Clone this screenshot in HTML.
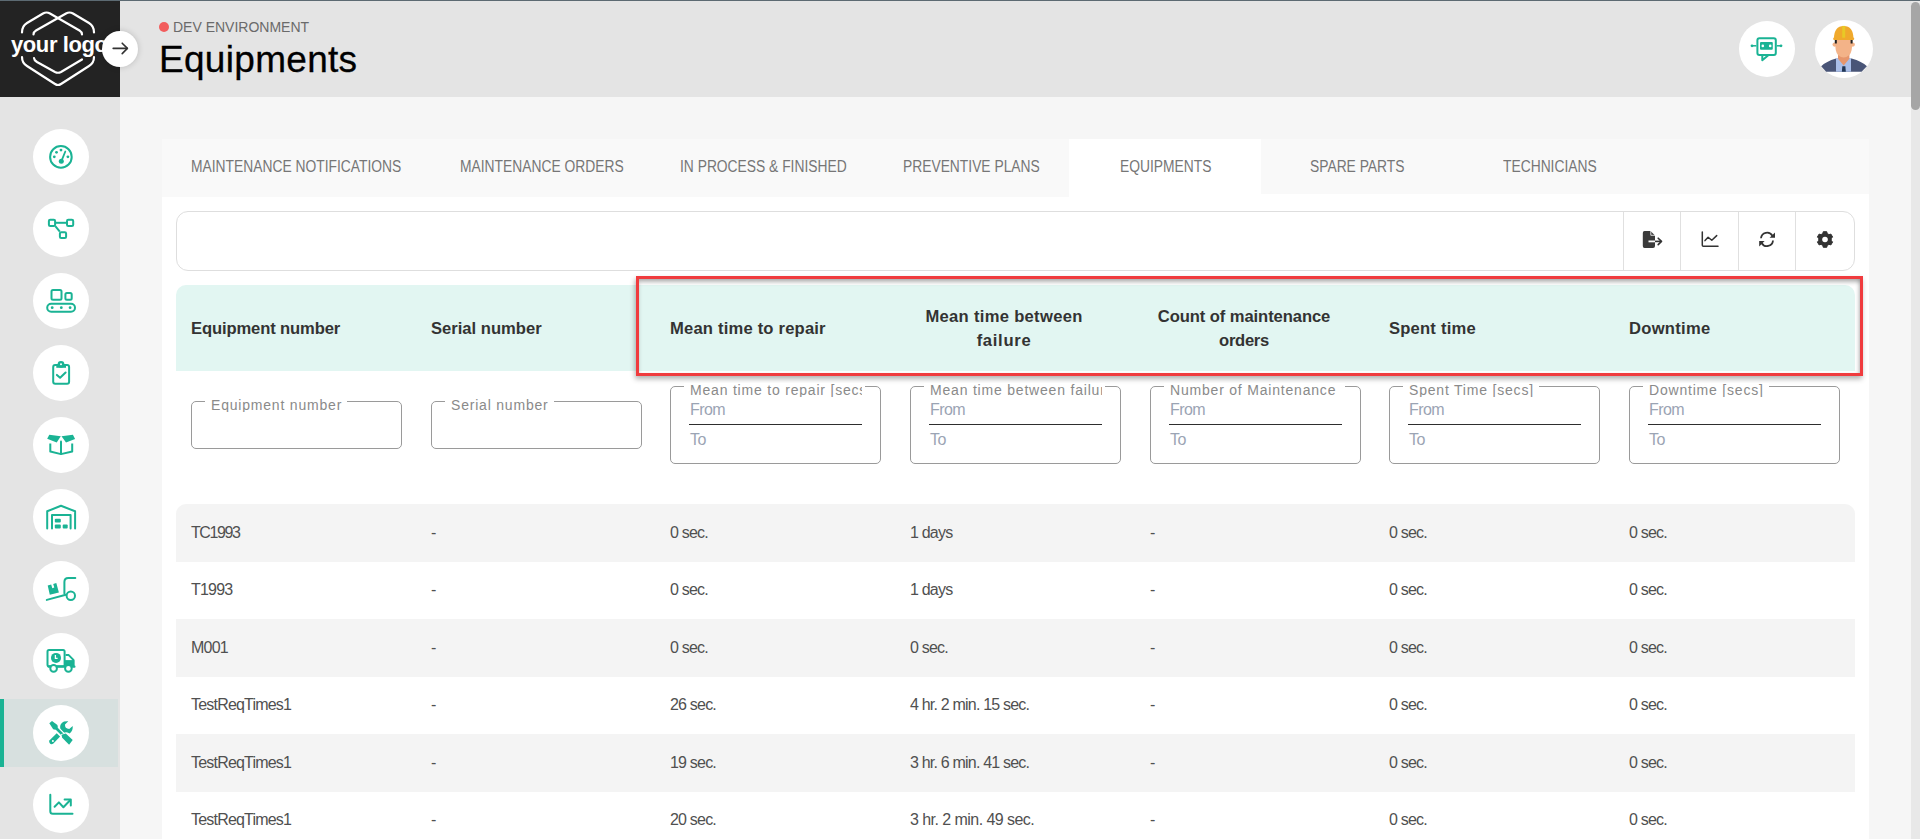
<!DOCTYPE html>
<html><head><meta charset="utf-8">
<style>
*{box-sizing:border-box;margin:0;padding:0}
html,body{width:1920px;height:839px;overflow:hidden}
body{position:relative;background:#f6f6f6;font-family:"Liberation Sans",sans-serif;color:#333}
.a{position:absolute}
.t{position:absolute;white-space:nowrap;line-height:1}
#topline{left:0;top:0;width:1920px;height:1px;background:#5c6a72}
#header{left:120px;top:1px;width:1791px;height:96px;background:#e4e4e4}
#logo{left:0;top:1px;width:120px;height:96px;background:#232323}
#sidebar{left:0;top:97px;width:120px;height:742px;background:#e4e4e4}
#track{left:1911px;top:1px;width:9px;height:838px;background:#e8e8e8}
#thumb{left:1911px;top:2px;width:9px;height:108px;background:#a6a6a6;border-radius:5px}
.circ{position:absolute;width:56px;height:56px;border-radius:50%;background:#fff}
.circ svg{position:absolute;left:0;top:0}
#card{left:162px;top:139px;width:1707px;height:700px;background:#fff}
.tabbg{position:absolute;background:#f9f9f9}
.tab{position:absolute;top:159px;font-size:16px;transform-origin:0 0;transform:scaleX(0.864);color:#767676;line-height:1;white-space:nowrap}
#toolbar{left:176px;top:211px;width:1679px;height:60px;border:1px solid #dedede;border-radius:12px;background:#fff}
.sep{position:absolute;top:212px;width:1px;height:58px;background:#e0e0e0}
#thead{left:176px;top:285px;width:1679px;height:86px;background:#e2f6f2;border-radius:10px 10px 0 0}
.th{position:absolute;font-size:16.6px;font-weight:bold;color:#333;line-height:24px;white-space:nowrap}
#redbox{left:636px;top:276px;width:1227px;height:100px;border:3px solid #f03b3e;box-shadow:-1px 3px 5px rgba(0,0,0,.3), inset 0 4px 4px -1px rgba(0,0,0,.3), inset -3px 0 4px -2px rgba(0,0,0,.2)}
.fld{position:absolute;border:1px solid #9a9a9a;border-radius:5px}
.lgd{position:absolute;background:#fff;height:14px;padding-left:6px}
.lgd span{display:block;overflow:hidden;font-size:14px;letter-spacing:0.8px;color:#8a8a8a;line-height:14px;white-space:nowrap}
.ph{position:absolute;font-size:16px;letter-spacing:-0.6px;color:#9ba4b4;line-height:1;white-space:nowrap}
.uline{position:absolute;height:1px;background:#2e2e2e}
.row{position:absolute;left:176px;width:1679px}
.g{background:#f4f4f4}
.td{position:absolute;font-size:16px;letter-spacing:-0.8px;color:#505050;line-height:1;white-space:nowrap}
</style></head><body>
<div id="topline" class="a"></div>
<div id="header" class="a"></div>
<div id="logo" class="a"></div>
<div id="sidebar" class="a"></div>
<div id="track" class="a"></div>
<div id="thumb" class="a"></div>

<div class="a" style="left:0;top:699px;width:118px;height:68px;background:#d7e0df"></div>
<div class="a" style="left:0;top:699px;width:4px;height:68px;background:#1ab394"></div>
<div class="circ" style="left:33px;top:129px"></div>
<svg class="a" style="left:41px;top:137px" width="40" height="40" viewBox="0 0 40 40"><circle cx="19.9" cy="19.9" r="10.8" fill="none" stroke="#1ab394" stroke-width="2"/>
<line x1="20.3" y1="24.3" x2="24.3" y2="14.5" stroke="#1ab394" stroke-width="1.8" stroke-linecap="round"/>
<circle cx="20.3" cy="24.3" r="2.5" fill="#1ab394"/>
<circle cx="13.3" cy="19.8" r="1.4" fill="#1ab394"/><circle cx="15.5" cy="15.3" r="1.4" fill="#1ab394"/>
<circle cx="20" cy="13.1" r="1.4" fill="#1ab394"/><circle cx="26.9" cy="19.8" r="1.4" fill="#1ab394"/></svg>
<div class="circ" style="left:33px;top:201px"></div>
<svg class="a" style="left:41px;top:209px" width="40" height="40" viewBox="0 0 40 40"><g fill="none" stroke="#1ab394" stroke-width="2"><rect x="7.9" y="10.8" width="6.2" height="6.2" rx="1.3"/>
<rect x="26" y="10.8" width="6.2" height="6.2" rx="1.3"/><rect x="18.9" y="23.2" width="6.2" height="5.8" rx="1.3"/>
<line x1="14" y1="13.8" x2="26" y2="13.8"/><line x1="14.3" y1="17.2" x2="18.8" y2="22.6"/></g></svg>
<div class="circ" style="left:33px;top:273px"></div>
<svg class="a" style="left:41px;top:281px" width="40" height="40" viewBox="0 0 40 40"><g fill="none" stroke="#1ab394" stroke-width="2"><rect x="10.5" y="8.9" width="10" height="9.9" rx="1.5"/>
<rect x="24.4" y="12" width="6.3" height="6.8" rx="1.5"/><rect x="6.2" y="22.7" width="27.8" height="8" rx="4"/></g>
<circle cx="11.2" cy="26.7" r="1.4" fill="#1ab394"/><circle cx="20.3" cy="26.7" r="1.4" fill="#1ab394"/><circle cx="29.1" cy="26.7" r="1.4" fill="#1ab394"/></svg>
<div class="circ" style="left:33px;top:345px"></div>
<svg class="a" style="left:41px;top:353px" width="40" height="40" viewBox="0 0 40 40"><rect x="12.2" y="12" width="15.9" height="18.7" rx="2" fill="none" stroke="#1ab394" stroke-width="2"/>
<rect x="15.3" y="11.2" width="9.7" height="3.6" fill="#1ab394"/><circle cx="20" cy="11.3" r="3.4" fill="#1ab394"/><circle cx="20" cy="11.3" r="1" fill="#fff"/>
<polyline points="15.9,21.9 19.1,24.8 24.6,19.5" fill="none" stroke="#1ab394" stroke-width="2" stroke-linecap="round" stroke-linejoin="round"/></svg>
<div class="circ" style="left:33px;top:417px"></div>
<svg class="a" style="left:41px;top:425px" width="40" height="40" viewBox="0 0 40 40"><polygon points="6.2,13.8 8.3,9.8 19.8,11.2 15.7,17.6" fill="#1ab394"/><polygon points="20.5,11.2 31.9,9.8 34.1,14.1 25,17.6" fill="#1ab394"/>
<polyline points="9.3,18.4 9.3,26.5 20,29.1 31.2,26.5 31.2,18.4" fill="none" stroke="#1ab394" stroke-width="2" stroke-linejoin="round"/>
<line x1="20" y1="16.4" x2="20" y2="28.8" stroke="#1ab394" stroke-width="2" stroke-linecap="round"/></svg>
<div class="circ" style="left:33px;top:489px"></div>
<svg class="a" style="left:41px;top:497px" width="40" height="40" viewBox="0 0 40 40"><polyline points="6.2,31.5 6.2,14.3 20,8.8 34.1,14.3 34.1,31.5" fill="none" stroke="#1ab394" stroke-width="2" stroke-linejoin="round" stroke-linecap="round"/>
<polyline points="11,31.5 11,18.1 29.6,18.1 29.6,31.5" fill="none" stroke="#1ab394" stroke-width="2" stroke-linejoin="round" stroke-linecap="round"/>
<rect x="13.8" y="21.7" width="6" height="3.8" rx="1" fill="#1ab394"/><rect x="13.8" y="27.4" width="6" height="4.1" rx="1" fill="#1ab394"/><rect x="21.7" y="27.4" width="5" height="4.1" rx="1" fill="#1ab394"/></svg>
<div class="circ" style="left:33px;top:561px"></div>
<svg class="a" style="left:41px;top:569px" width="40" height="40" viewBox="0 0 40 40"><path d="M23.4 24.5V13Q23.4 9.1 27.3 9.1H34.3" fill="none" stroke="#1ab394" stroke-width="2" stroke-linecap="round"/>
<line x1="5.8" y1="30.9" x2="24.8" y2="25.7" stroke="#1ab394" stroke-width="2" stroke-linecap="round"/>
<circle cx="29.8" cy="26.7" r="4.2" fill="none" stroke="#1ab394" stroke-width="2"/>
<polygon points="6.7,16.4 10.2,15.5 11.3,19.2 13.3,18.6 12.2,14.9 15.3,14.1 17.9,23.4 8.8,25.7" fill="#1ab394"/></svg>
<div class="circ" style="left:33px;top:633px"></div>
<svg class="a" style="left:41px;top:641px" width="40" height="40" viewBox="0 0 40 40"><rect x="6.5" y="8.9" width="17.1" height="16.3" rx="1.5" fill="none" stroke="#1ab394" stroke-width="2"/>
<circle cx="15" cy="16.9" r="5" fill="#1ab394"/><polyline points="14.4,13.9 14.4,17.4 16.6,17.4" fill="none" stroke="#fff" stroke-width="1.3"/>
<path d="M24.6 13.9H27.5L32.4 18.8V25" fill="none" stroke="#1ab394" stroke-width="2"/>
<rect x="23.6" y="19.1" width="9.8" height="7" fill="#1ab394"/><rect x="6.5" y="24.5" width="28" height="2.2" rx="1" fill="#1ab394"/>
<circle cx="12.6" cy="27.4" r="3.3" fill="#fff" stroke="#1ab394" stroke-width="2"/><circle cx="27.4" cy="27.4" r="3.3" fill="#fff" stroke="#1ab394" stroke-width="2"/></svg>
<div class="circ" style="left:33px;top:705px"></div>
<svg class="a" style="left:41px;top:713px" width="40" height="40" viewBox="0 0 40 40"><path d="M19.2 15.5Q18.5 10.5 23 8.6Q25 8 27.3 8.2L24 11.6Q23.6 15.8 28.2 15.9L31.7 13Q32.2 18 28.6 20.5L26.5 19.5Q24.8 18.6 22.5 20Z" fill="#1ab394"/>
<path d="M8.6 27.3L15.7 20.3L19.1 23.4L12.4 30.6Q10 32 8.6 30Q7.6 28.5 8.6 27.3Z" fill="#1ab394"/><circle cx="11.9" cy="28.1" r="1" fill="#fff"/>
<line x1="15" y1="15" x2="22" y2="22" stroke="#fff" stroke-width="5"/>
<path d="M8.3 10.3L11 8.1L16.4 11.9L16.9 14.3L14.3 16.7L12.2 16.2Z" fill="#1ab394"/>
<line x1="14.5" y1="14.5" x2="22" y2="22" stroke="#1ab394" stroke-width="2.6"/>
<path d="M20.5 21.7L24.8 20.5L31.7 26.9L28.1 31.7L21.2 24.8Z" fill="#1ab394" stroke="#fff" stroke-width="1.2" stroke-linejoin="round" paint-order="stroke"/></svg>
<div class="circ" style="left:33px;top:777px"></div>
<svg class="a" style="left:41px;top:785px" width="40" height="40" viewBox="0 0 40 40"><path d="M9.3 9.8V26.3Q9.3 28.8 11.8 28.8H31.5" fill="none" stroke="#1ab394" stroke-width="2" stroke-linecap="round"/>
<polyline points="13.6,21.7 17.9,17.4 22.4,22.2 28.6,15.7" fill="none" stroke="#1ab394" stroke-width="2" stroke-linecap="round" stroke-linejoin="round"/>
<polyline points="23.6,14.5 29.8,14.5 29.8,20.5" fill="none" stroke="#1ab394" stroke-width="2" stroke-linecap="round" stroke-linejoin="round"/></svg>
<svg class="a" style="left:0;top:0" width="120" height="97" viewBox="0 0 120 97"><g fill="none" stroke="#fff" stroke-width="2.2" stroke-linecap="round">
<path d="M22 32.5Q22 26 27 23L43 13.5Q46.5 11.5 50 13.5L79.5 30.5Q82 32 82 34.5"/>
<path d="M33.5 34.5Q33.5 32 36 30.5L66 13.5Q69.5 11.5 73 13.5L89 23Q94 26 94 32.5"/>
<path d="M22 57Q22 63 27 66L55 84Q58 86 61 84L89 66Q94 63 94 57"/>
<path d="M34 58Q34 60 37 62L55 72Q58 73.5 61 72L82 59.5"/></g></svg>
<div class="t" style="left:11px;top:34px;font-size:22px;font-weight:bold;letter-spacing:-0.4px;color:#fff">your logo</div>
<div class="a" style="left:102px;top:31px;width:36px;height:36px;border-radius:50%;background:#fff;box-shadow:0 0 6px rgba(0,0,0,.18)"></div>
<svg class="a" style="left:102px;top:31px" width="36" height="36" viewBox="0 0 36 36"><g fill="none" stroke="#333" stroke-width="1.6" stroke-linecap="round" stroke-linejoin="round"><line x1="11.2" y1="17.4" x2="25.2" y2="17.4"/><polyline points="20.2,12.2 25.4,17.4 20.2,22.6"/></g></svg>
<div class="a" style="left:1738.5px;top:21px;width:56px;height:56px;border-radius:50%;background:#fff"></div>
<svg class="a" style="left:1736px;top:18px" width="60" height="60" viewBox="0 0 60 60">
<rect x="21.4" y="20.2" width="18.4" height="16.7" rx="2" fill="none" stroke="#1ab394" stroke-width="2"/>
<rect x="24" y="24" width="12.8" height="7.8" rx="1" fill="#1ab394"/><circle cx="26.8" cy="27.9" r="1.3" fill="#fff"/><circle cx="34.2" cy="27.9" r="1.3" fill="#fff"/>
<line x1="16" y1="27.8" x2="20.4" y2="27.8" stroke="#1ab394" stroke-width="1.5"/><line x1="40.8" y1="27.8" x2="45" y2="27.8" stroke="#1ab394" stroke-width="1.5"/>
<circle cx="16" cy="27.8" r="1.4" fill="#1ab394"/><circle cx="45" cy="27.8" r="1.4" fill="#1ab394"/>
<path d="M26.3 36.9V42.2L32.6 37" fill="none" stroke="#1ab394" stroke-width="2" stroke-linejoin="round"/></svg>
<div class="a" style="left:1815px;top:20px;width:58px;height:58px;border-radius:50%;background:#fff"></div>
<svg class="a" style="left:1812px;top:16px" width="64" height="64" viewBox="0 0 64 64">
<path d="M9.2 50.3Q14 45.5 24 42.6H39.6Q50 45.5 54.9 50.3L49.6 55.7H14.1Z" fill="#495577"/>
<rect x="24" y="42" width="15" height="13.7" fill="#a9bee8"/>
<path d="M26 36.6H37.4V42.8L31.7 49.6L26 42.8Z" fill="#e6966c"/>
<path d="M30.3 50.3H33.4L33.8 55.7H29.9Z" fill="#1f3554"/>
<circle cx="22.6" cy="28.6" r="2.1" fill="#f3b388"/><circle cx="40.8" cy="28.6" r="2.1" fill="#f3b388"/>
<path d="M23 24Q23 36 26 39Q29 41.5 31.7 41.5Q34.4 41.5 37.4 39Q40.4 36 40.4 24Z" fill="#f3b388"/>
<rect x="22.8" y="22.5" width="2" height="5" fill="#222"/><rect x="38.6" y="22.5" width="2" height="5" fill="#222"/>
<path d="M22 22.5Q22 10 31.7 9.9Q41.4 10 41.4 22.5Z" fill="#f0a92c"/>
<rect x="21.2" y="21.6" width="21" height="2.4" rx="1" fill="#f0a92c"/>
<rect x="30.2" y="9.9" width="3" height="11.8" fill="#e8c926"/></svg>

<!-- header text -->
<div class="a" style="left:159px;top:22px;width:10px;height:10px;border-radius:50%;background:#f25c5c"></div>
<div class="t" style="left:173px;top:20px;font-size:14px;color:#6a6a6a">DEV ENVIRONMENT</div>
<div class="t" style="left:159px;top:41px;font-size:37px;letter-spacing:0.3px;-webkit-text-stroke:0.3px #000;color:#000">Equipments</div>

<div id="card" class="a"></div>
<div class="tabbg" style="left:162px;top:139px;width:907px;height:58px"></div>
<div class="tabbg" style="left:1261px;top:139px;width:608px;height:55px"></div>
<div class="tab" style="left:191px">MAINTENANCE NOTIFICATIONS</div>
<div class="tab" style="left:460px">MAINTENANCE ORDERS</div>
<div class="tab" style="left:680px">IN PROCESS &amp; FINISHED</div>
<div class="tab" style="left:903px">PREVENTIVE PLANS</div>
<div class="tab" style="left:1120px">EQUIPMENTS</div>
<div class="tab" style="left:1310px">SPARE PARTS</div>
<div class="tab" style="left:1503px">TECHNICIANS</div>

<div id="toolbar" class="a"></div>
<div class="sep" style="left:1623px"></div>
<div class="sep" style="left:1680px"></div>
<div class="sep" style="left:1738px"></div>
<div class="sep" style="left:1795px"></div>

<div id="thead" class="a"></div>
<div id="redbox" class="a"></div>
<div class="th" style="left:191px;top:317px;letter-spacing:-0.13px">Equipment number</div>
<div class="th" style="left:431px;top:317px">Serial number</div>
<div class="th" style="left:670px;top:317px;letter-spacing:0.19px">Mean time to repair</div>
<div class="th" style="left:1389px;top:317px;letter-spacing:0.2px">Spent time</div>
<div class="th" style="left:1629px;top:317px;letter-spacing:0.28px">Downtime</div>
<div class="th" style="left:904px;top:305px;width:200px;text-align:center"><span style="letter-spacing:0.3px">Mean time between</span><br><span style="letter-spacing:0.7px">failure</span></div>
<div class="th" style="left:1144px;top:305px;width:200px;text-align:center"><span style="letter-spacing:-0.09px">Count of maintenance</span><br><span style="letter-spacing:-0.3px">orders</span></div>
<div class="fld" style="left:191px;top:401px;width:211px;height:48px"></div>
<div class="fld" style="left:431px;top:401px;width:211px;height:48px"></div>
<div class="fld" style="left:670px;top:386px;width:211px;height:78px"></div>
<div class="ph" style="left:690px;top:401.5px">From</div>
<div class="uline" style="left:689px;top:424px;width:173px"></div>
<div class="ph" style="left:690px;top:431.5px">To</div>
<div class="fld" style="left:910px;top:386px;width:211px;height:78px"></div>
<div class="ph" style="left:930px;top:401.5px">From</div>
<div class="uline" style="left:929px;top:424px;width:173px"></div>
<div class="ph" style="left:930px;top:431.5px">To</div>
<div class="fld" style="left:1150px;top:386px;width:211px;height:78px"></div>
<div class="ph" style="left:1170px;top:401.5px">From</div>
<div class="uline" style="left:1169px;top:424px;width:173px"></div>
<div class="ph" style="left:1170px;top:431.5px">To</div>
<div class="fld" style="left:1389px;top:386px;width:211px;height:78px"></div>
<div class="ph" style="left:1409px;top:401.5px">From</div>
<div class="uline" style="left:1408px;top:424px;width:173px"></div>
<div class="ph" style="left:1409px;top:431.5px">To</div>
<div class="fld" style="left:1629px;top:386px;width:211px;height:78px"></div>
<div class="ph" style="left:1649px;top:401.5px">From</div>
<div class="uline" style="left:1648px;top:424px;width:173px"></div>
<div class="ph" style="left:1649px;top:431.5px">To</div>
<div class="lgd" style="left:205px;top:398px;padding-right:5px"><span>Equipment number</span></div>
<div class="lgd" style="left:445px;top:398px;padding-right:5px"><span>Serial number</span></div>
<div class="lgd" style="left:684px;top:383px;width:181px"><span style="width:172px">Mean time to repair [secs]</span></div>
<div class="lgd" style="left:924px;top:383px;width:181px"><span style="width:172px">Mean time between failure [secs]</span></div>
<div class="lgd" style="left:1164px;top:383px;width:181px"><span style="width:172px">Number of Maintenance</span></div>
<div class="lgd" style="left:1403px;top:383px;padding-right:5px"><span>Spent Time [secs]</span></div>
<div class="lgd" style="left:1643px;top:383px;padding-right:5px"><span>Downtime [secs]</span></div>
<div class="row g" style="top:504.0px;height:57.5px;border-radius:10px 10px 0 0;"></div>
<div class="td" style="left:191px;top:524.8px;letter-spacing:-1.4px">TC1993</div>
<div class="td" style="left:431px;top:524.8px">-</div>
<div class="td" style="left:670px;top:524.8px">0 sec.</div>
<div class="td" style="left:910px;top:524.8px">1 days</div>
<div class="td" style="left:1150px;top:524.8px">-</div>
<div class="td" style="left:1389px;top:524.8px">0 sec.</div>
<div class="td" style="left:1629px;top:524.8px">0 sec.</div>
<div class="td" style="left:191px;top:582.3px">T1993</div>
<div class="td" style="left:431px;top:582.3px">-</div>
<div class="td" style="left:670px;top:582.3px">0 sec.</div>
<div class="td" style="left:910px;top:582.3px">1 days</div>
<div class="td" style="left:1150px;top:582.3px">-</div>
<div class="td" style="left:1389px;top:582.3px">0 sec.</div>
<div class="td" style="left:1629px;top:582.3px">0 sec.</div>
<div class="row g" style="top:619.0px;height:57.5px;"></div>
<div class="td" style="left:191px;top:639.8px">M001</div>
<div class="td" style="left:431px;top:639.8px">-</div>
<div class="td" style="left:670px;top:639.8px">0 sec.</div>
<div class="td" style="left:910px;top:639.8px">0 sec.</div>
<div class="td" style="left:1150px;top:639.8px">-</div>
<div class="td" style="left:1389px;top:639.8px">0 sec.</div>
<div class="td" style="left:1629px;top:639.8px">0 sec.</div>
<div class="td" style="left:191px;top:697.3px">TestReqTimes1</div>
<div class="td" style="left:431px;top:697.3px">-</div>
<div class="td" style="left:670px;top:697.3px">26 sec.</div>
<div class="td" style="left:910px;top:697.3px">4 hr. 2 min. 15 sec.</div>
<div class="td" style="left:1150px;top:697.3px">-</div>
<div class="td" style="left:1389px;top:697.3px">0 sec.</div>
<div class="td" style="left:1629px;top:697.3px">0 sec.</div>
<div class="row g" style="top:734.0px;height:57.5px;"></div>
<div class="td" style="left:191px;top:754.8px">TestReqTimes1</div>
<div class="td" style="left:431px;top:754.8px">-</div>
<div class="td" style="left:670px;top:754.8px">19 sec.</div>
<div class="td" style="left:910px;top:754.8px">3 hr. 6 min. 41 sec.</div>
<div class="td" style="left:1150px;top:754.8px">-</div>
<div class="td" style="left:1389px;top:754.8px">0 sec.</div>
<div class="td" style="left:1629px;top:754.8px">0 sec.</div>
<div class="td" style="left:191px;top:812.3px">TestReqTimes1</div>
<div class="td" style="left:431px;top:812.3px">-</div>
<div class="td" style="left:670px;top:812.3px">20 sec.</div>
<div class="td" style="left:910px;top:812.3px;letter-spacing:-0.55px">3 hr. 2 min. 49 sec.</div>
<div class="td" style="left:1150px;top:812.3px">-</div>
<div class="td" style="left:1389px;top:812.3px">0 sec.</div>
<div class="td" style="left:1629px;top:812.3px">0 sec.</div>
<svg class="a" style="left:1636px;top:225px" width="32" height="30" viewBox="1636 225 32 30">
<path d="M1644.5 231H1650.5L1655 235.5V246Q1655 248 1653 248H1644.5Q1642.8 248 1642.8 246V233Q1642.8 231 1644.5 231Z" fill="#3b3b3b"/>
<path d="M1650.8 231V235.3H1655" fill="none" stroke="#fff" stroke-width="0.8"/>
<rect x="1648.5" y="240.5" width="7" height="1.8" fill="#fff"/>
<line x1="1655" y1="241.4" x2="1661" y2="241.4" stroke="#333" stroke-width="1.6"/>
<polyline points="1658.2,238.2 1661.5,241.4 1658.2,244.6" fill="none" stroke="#333" stroke-width="1.6" stroke-linecap="round" stroke-linejoin="round"/></svg>
<svg class="a" style="left:1695px;top:225px" width="30" height="30" viewBox="1695 225 30 30">
<path d="M1702.3 232V245.3Q1702.3 246.3 1703.3 246.3H1718" fill="none" stroke="#333" stroke-width="1.5" stroke-linecap="round"/>
<polyline points="1705,240.6 1708.1,237.2 1711.8,240.3 1716.7,235.6" fill="none" stroke="#333" stroke-width="1.5" stroke-linecap="round" stroke-linejoin="round"/></svg>
<svg class="a" style="left:1752px;top:224px" width="30" height="30" viewBox="1752 224 30 30">
<path d="M1761 238.3A6.1 6.1 0 0 1 1772.4 235.8" fill="none" stroke="#333" stroke-width="1.8"/>
<polygon points="1775,232.4 1775,237.8 1769.6,237.8" fill="#333"/>
<path d="M1773 240.5A6.1 6.1 0 0 1 1761.6 243" fill="none" stroke="#333" stroke-width="1.8"/>
<polygon points="1759.2,246.4 1759.2,241 1764.6,241" fill="#333"/></svg>
<svg class="a" style="left:1810px;top:225px" width="30" height="30" viewBox="1810 225 30 30">
<polygon points="1822.78,233.60 1823.25,231.69 1826.75,231.69 1827.22,233.60 1829.00,234.63 1830.89,234.08 1832.63,237.11 1831.22,238.47 1831.22,240.53 1832.63,241.89 1830.89,244.92 1829.00,244.37 1827.22,245.40 1826.75,247.31 1823.25,247.31 1822.78,245.40 1821.00,244.37 1819.11,244.92 1817.37,241.89 1818.78,240.53 1818.78,238.47 1817.37,237.11 1819.11,234.08 1821.00,234.63" fill="#333" stroke="#333" stroke-width="1" stroke-linejoin="round"/>
<circle cx="1825" cy="239.5" r="2.8" fill="#fff"/></svg>
</body></html>
